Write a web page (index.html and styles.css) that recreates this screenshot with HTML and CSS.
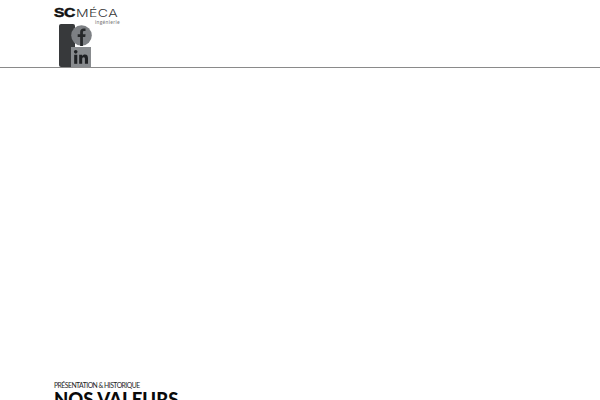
FILE: index.html
```html
<!DOCTYPE html>
<html lang="fr">
<head>
<meta charset="utf-8">
<title>SC Méca Ingénierie</title>
<link rel="stylesheet" href="styles.css">
</head>
<body>
<header class="site-header">
  <div class="brand">
    <div class="brand-main"><span class="brand-sc">SC</span><span class="brand-meca">MÉCA</span></div>
    <div class="brand-sub">ingénierie</div>
  </div>
  <div class="social">
    <div class="social-bar"></div>
    <div class="social-icons">
      <svg class="icon" viewBox="0 0 22 22" width="21" height="21">
        <circle cx="11" cy="11" r="10.8" fill="#7d8084"/>
        <path d="M9.6 22V12.6H7V9.6h2.6V7.4C9.6 4.9 11 3.6 13.2 3.6c.9 0 1.6.1 2 .1v2.7h-1.3c-1.2 0-1.4.6-1.4 1.4v1.8h2.8l-.4 3h-2.4V22z" fill="#26282a"/>
      </svg>
      <svg class="icon" viewBox="0 0 22 22" width="20" height="20">
        <rect x="0" y="0" width="22" height="22" fill="#888b8e"/>
        <rect x="3.5" y="8.5" width="3.4" height="10" fill="#1f2123"/>
        <circle cx="5.2" cy="5.3" r="2" fill="#1f2123"/>
        <path d="M9 8.5h3.2v1.5c.6-1 1.7-1.7 3.1-1.7 2.7 0 3.4 1.8 3.4 4.4v5.8h-3.4v-5.2c0-1.2-.2-2.1-1.4-2.1s-1.6.9-1.6 2.1v5.2H9z" fill="#1f2123"/>
      </svg>
    </div>
  </div>
</header>
<main class="content">
  <p class="eyebrow">PRÉSENTATION &amp; HISTORIQUE</p>
  <h1 class="title">NOS VALEURS</h1>
</main>
</body>
</html>
```
FILE: styles.css
```css
html, body {
  margin: 0;
  padding: 0;
  height: 400px;
  overflow: hidden;
  background: #fff;
  font-family: "Lato", "Liberation Sans", sans-serif;
  color: #111;
}
.site-header {
  height: 68px;
  box-sizing: border-box;
  padding: 7px 0 0 54px;
  border-bottom: 1px solid #8a8a8a;
}
.brand {
  width: 66px;
  height: 17px;
}
.brand-main {
  display: flex;
  align-items: baseline;
  height: 12px;
  line-height: 12px;
}
.brand-sc {
  display: inline-block;
  width: 22px;
  font-family: "Liberation Sans", sans-serif;
  font-weight: 700;
  font-size: 13px;
  letter-spacing: -0.4px;
  -webkit-text-stroke: 0.5px #111;
  transform: scaleX(1.2);
  transform-origin: left center;
  color: #111;
}
.brand-meca {
  display: inline-block;
  font-family: "Inter", sans-serif;
  font-weight: 300;
  font-size: 10px;
  letter-spacing: 0.3px;
  transform: scaleX(1.4);
  transform-origin: left center;
  color: #333;
}
.brand-sub {
  font-size: 5px;
  line-height: 6px;
  text-align: right;
  letter-spacing: 0.35px;
  color: #777;
}
.social {
  display: flex;
  margin: 0 0 0 5px;
  height: 44px;
}
.social-bar {
  width: 16px;
  height: 43px;
  background: #37393b;
  border-radius: 2px;
  margin-right: -4px;
}
.social-icons {
  display: flex;
  flex-direction: column;
  gap: 1px;
  padding-top: 1px;
  position: relative;
}
.icon {
  display: block;
}
.content {
  padding: 313px 0 0 54px;
}
.eyebrow {
  margin: 0;
  font-size: 6.8px;
  line-height: 9px;
  letter-spacing: -0.5px;
  font-weight: 400;
  color: #222;
}
.title {
  margin: 0;
  font-family: "Lato", sans-serif;
  font-size: 18.5px;
  line-height: 19px;
  font-weight: 900;
  color: #0a0a0a;
}
```
